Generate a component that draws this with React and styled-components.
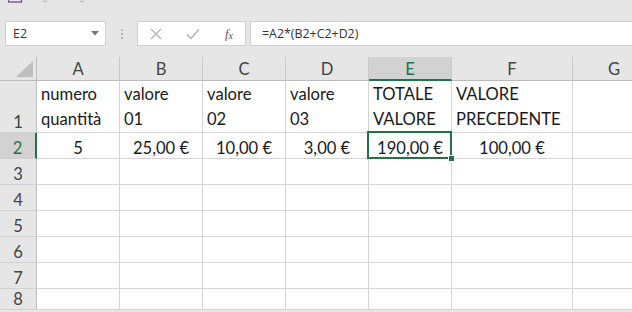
import React from 'react';
import styled, { createGlobalStyle } from 'styled-components';

const GlobalStyle = createGlobalStyle`
  html, body {
    margin: 0;
    padding: 0;
    background: #e6e6e6;
    overflow: hidden;
  }
`;

const Window = styled.div`
  width: 632px;
  height: 312px;
  overflow: hidden;
  background: #e6e6e6;
  font-family: Lato, "Open Sans", sans-serif;
  color: #1a1a1a;
`;

// striscia in alto (barra rapida tagliata)
const TopStrip = styled.div`
  height: 21px;
  display: flex;
  align-items: flex-start;
  padding-left: 8px;
`;

const FormulaBar = styled.div`
  height: 25px;
  display: flex;
  align-items: stretch;
  padding-left: 5px;
  font-family: "Open Sans", sans-serif;
  font-size: 12.4px;
  color: #333;
`;

const Field = styled.div`
  box-sizing: border-box;
  background: #fff;
  border: 1px solid #d0d0d0;
  display: flex;
  align-items: center;
`;

const NameBox = styled(Field)`
  width: 101px;
  padding: 0 6px 0 7px;
  justify-content: space-between;
`;

const Grip = styled.div`
  width: 31px;
  display: flex;
  flex-direction: column;
  align-items: center;
  justify-content: center;
  gap: 2px;
  span {
    width: 2px;
    height: 2px;
    background: #b5b5b5;
  }
`;

const FxButtons = styled(Field)`
  width: 109px;
  padding: 0 12px 0 12px;
  justify-content: space-between;
`;

const FxLabel = styled.span`
  font-family: "Liberation Serif", serif;
  font-style: italic;
  font-size: 13px;
  color: #555;
  sub {
    font-size: 10px;
    vertical-align: -1px;
  }
`;

const FormulaInput = styled(Field)`
  flex: 1;
  margin-left: 4px;
  padding-left: 11px;
  border-right: none;
`;

const Spacer = styled.div`
  height: 11px;
`;

const Sheet = styled.div`
  display: grid;
  grid-template-columns: 37px repeat(5, 83px) 121px 83px;
  grid-template-rows: 24px 52px repeat(6, 26px);
  font-size: 16.6px;
`;

const Corner = styled.div`
  box-sizing: border-box;
  background: #e6e6e6;
  border-right: 1px solid #bcbcbc;
  border-bottom: 1px solid #bcbcbc;
  display: flex;
  align-items: flex-end;
  justify-content: flex-end;
  padding: 0 3px 3px 0;
`;

const ColHead = styled.div`
  box-sizing: border-box;
  background: ${p => (p.$active ? '#d2d2d2' : '#e6e6e6')};
  color: ${p => (p.$active ? '#217346' : '#444')};
  border-right: 1px solid #c9c9c9;
  border-bottom: ${p => (p.$active ? '2px solid #217346' : '1px solid #bcbcbc')};
  text-align: center;
  line-height: 23px;
  padding-top: 1px;
`;

const RowHead = styled.div`
  box-sizing: border-box;
  background: ${p => (p.$active ? '#d2d2d2' : '#e6e6e6')};
  color: ${p => (p.$active ? '#217346' : '#444')};
  border-right: ${p => (p.$active ? '2px solid #217346' : '1px solid #bcbcbc')};
  border-bottom: 1px solid #d0d0d0;
  display: flex;
  align-items: flex-end;
  justify-content: center;
  line-height: 20px;
`;

const Cell = styled.div`
  position: relative;
  box-sizing: border-box;
  background: #fff;
  border-right: 1px solid #d4d4d4;
  border-bottom: 1px solid #d4d4d4;
  display: flex;
  flex-direction: column;
  justify-content: flex-end;
  align-items: ${p => (p.$center ? 'center' : 'flex-start')};
  padding: 0 4px;
  line-height: ${p => (p.$wrap ? '25px' : '20px')};
  white-space: nowrap;

  ${p =>
    p.$selected &&
    `
    &::after {
      content: '';
      position: absolute;
      left: -2px;
      top: -2px;
      right: -1px;
      bottom: -1px;
      border: 2px solid #217346;
      pointer-events: none;
    }
    &::before {
      content: '';
      position: absolute;
      right: -4px;
      bottom: -4px;
      width: 5px;
      height: 5px;
      background: #217346;
      border: 1px solid #fff;
      z-index: 2;
    }
  `}
`;

const columns = ['A', 'B', 'C', 'D', 'E', 'F', 'G'];

const header = [
  ['numero', 'quantità'],
  ['valore', '01'],
  ['valore', '02'],
  ['valore', '03'],
  ['TOTALE', 'VALORE'],
  ['VALORE', 'PRECEDENTE'],
  null,
];

const values = ['5', '25,00 €', '10,00 €', '3,00 €', '190,00 €', '100,00 €', ''];

function TopIcons() {
  return (
    <svg width="90" height="4" viewBox="0 0 90 4">
      <rect x="0.5" y="-2" width="13" height="4" fill="none" stroke="#7a4f9e" strokeWidth="1.4" />
      <path d="M35 0.5 Q37 3 39 0.5" stroke="#b0b0b0" strokeWidth="1.2" fill="none" />
      <path d="M72 0.5 Q74 3 76 0.5" stroke="#b0b0b0" strokeWidth="1.2" fill="none" />
    </svg>
  );
}

export default function App() {
  return (
    <Window>
      <GlobalStyle />
      <TopStrip>
        <TopIcons />
      </TopStrip>

      <FormulaBar>
        <NameBox>
          <span>E2</span>
          <svg width="8" height="5" viewBox="0 0 8 5">
            <path d="M0 0 H8 L4 4.5 Z" fill="#777" />
          </svg>
        </NameBox>
        <Grip>
          <span />
          <span />
          <span />
        </Grip>
        <FxButtons>
          <svg width="12" height="12" viewBox="0 0 12 12">
            <path d="M1 1 L11 11 M11 1 L1 11" stroke="#b3b3b3" strokeWidth="1.4" />
          </svg>
          <svg width="14" height="12" viewBox="0 0 14 12">
            <path d="M1 6.5 L5 10.5 L13 1.5" stroke="#b3b3b3" strokeWidth="1.5" fill="none" />
          </svg>
          <FxLabel>
            f<sub>x</sub>
          </FxLabel>
        </FxButtons>
        <FormulaInput>=A2*(B2+C2+D2)</FormulaInput>
      </FormulaBar>

      <Spacer />

      <Sheet>
        <Corner>
          <svg width="17" height="16" viewBox="0 0 17 16">
            <path d="M17 0 V16 H0 Z" fill="#bdbdbd" />
          </svg>
        </Corner>
        {columns.map(c => (
          <ColHead key={c} $active={c === 'E'}>
            {c}
          </ColHead>
        ))}

        <RowHead>1</RowHead>
        {header.map((lines, i) => (
          <Cell key={`h${i}`} $wrap>
            {lines && lines.map(l => <span key={l}>{l}</span>)}
          </Cell>
        ))}

        <RowHead $active>2</RowHead>
        {values.map((v, i) => (
          <Cell key={`v${i}`} $center $selected={i === 4}>
            {v}
          </Cell>
        ))}

        {[3, 4, 5, 6, 7, 8].map(r => (
          <React.Fragment key={r}>
            <RowHead>{r}</RowHead>
            {columns.map(c => (
              <Cell key={c + r} />
            ))}
          </React.Fragment>
        ))}
      </Sheet>
    </Window>
  );
}
